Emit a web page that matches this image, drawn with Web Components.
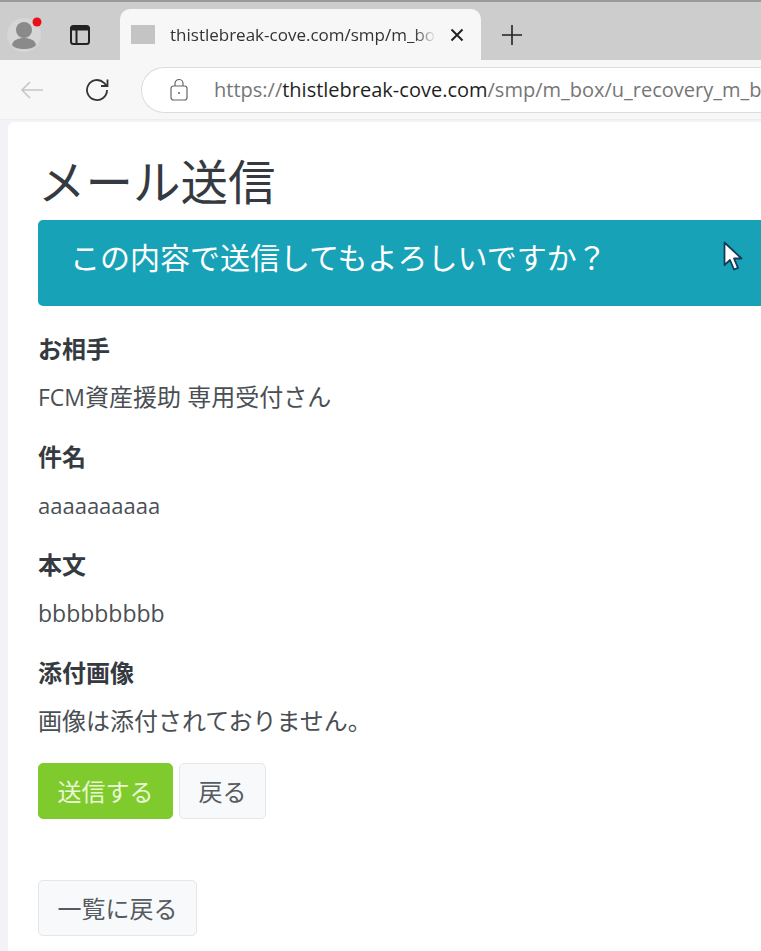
<!DOCTYPE html>
<html lang="ja">
<head>
<meta charset="utf-8">
<title>メール送信</title>
<style>
	html, body { margin: 0; height: 951px; overflow: hidden; background: #f2f2f7; }
	body { font-family: "Open Sans", "Noto Sans CJK JP", sans-serif; color: #343a40; }
	.latin { font-size: 23px; }
</style>
</head>
<body>
<browser-chrome url-host="thistlebreak-cove.com" url-path="/smp/m_box/u_recovery_m_box" tab-title="thistlebreak-cove.com/smp/m_box"></browser-chrome>
<page-card>
	<h-title>メール送信</h-title>
	<info-alert>この内容で送信してもよろしいですか？</info-alert>
	<mail-field label="お相手"><span class="latin">FCM</span>資産援助 専用受付さん</mail-field>
	<mail-field label="件名" latin>aaaaaaaaaa</mail-field>
	<mail-field label="本文"><span class="latin">bbbbbbbbb</span></mail-field>
	<mail-field label="添付画像">画像は添付されておりません。</mail-field>
	<button-row>
		<ui-button variant="primary">送信する</ui-button>
		<ui-button>戻る</ui-button>
	</button-row>
	<button-row class="list">
		<ui-button>一覧に戻る</ui-button>
	</button-row>
</page-card>

<script>
"use strict"

class BrowserChrome extends HTMLElement {
	connectedCallback() {
		const shadow = this.attachShadow({ mode: "open" })
		shadow.innerHTML = `
			<style>
				:host { display: block; font-family: "Open Sans", "Noto Sans", sans-serif; }
				svg { display: block; flex: none; }
				.strip {
					height: 58px;
					border-top: 2px solid #9a9a9a;
					background: #cdcdcd;
					display: flex;
					align-items: flex-end;
				}
				.left {
					width: 120px;
					height: 100%;
					flex: none;
					display: flex;
					align-items: center;
					padding: 8px 0 0 6px;
					gap: 25px;
					box-sizing: border-box;
				}
				.tab {
					width: 361px;
					height: 51px;
					flex: none;
					background: #f7f7f7;
					border-radius: 10px 10px 0 0;
					display: flex;
					align-items: center;
					padding-left: 11px;
					box-sizing: border-box;
					color: #333;
					font-size: 17px;
				}
				.favicon { width: 24px; height: 19px; background: #c4c4c4; flex: none; margin-right: 15px; }
				.title {
					width: 266px;
					white-space: nowrap;
					overflow: hidden;
					-webkit-mask-image: linear-gradient(90deg, #000 92%, transparent);
					mask-image: linear-gradient(90deg, #000 92%, transparent);
				}
				.close { margin-left: 14px; }
				.plus { margin: 0 0 14px 20px; }
				.toolbar {
					height: 60px;
					background: #f7f7f7;
					display: flex;
					align-items: center;
					box-sizing: border-box;
					border-bottom: 1px solid #ededed;
				}
				.back { margin-left: 20px; }
				.reload { margin-left: 41px; }
				.omnibox {
					flex: 1;
					min-width: 0;
					margin-left: 30px;
					height: 46px;
					background: #fff;
					border: 1px solid #dcdcdc;
					border-right: 0;
					border-radius: 23px 0 0 23px;
					display: flex;
					align-items: center;
					padding-left: 27px;
					box-sizing: border-box;
					overflow: hidden;
				}
				.url {
					margin-left: 25px;
					font-size: 20px;
					white-space: nowrap;
					color: #767676;
				}
				.url b { font-weight: 400; color: #1f1f1f; }
			</style>
			<div class="strip">
				<div class="left">
					<svg width="38" height="40" viewBox="0 0 38 40">
						<circle cx="18" cy="20" r="17" fill="#d6d6d6"/>
						<circle cx="18" cy="15" r="8" fill="#8a8a8a"/>
						<path d="M6 30c1-5 6-7 12-7s11 2 12 7c-2 3-7 4-12 4s-10-1-12-4z" fill="#8a8a8a"/>
						<circle cx="31" cy="7" r="4.5" fill="#e8111a"/>
					</svg>
					<svg width="22" height="22" viewBox="0 0 22 22" fill="none" stroke="#222" stroke-width="2">
						<rect x="2" y="2" width="18" height="18" rx="2.5"/>
						<path d="M2 4.5h18" stroke-width="4"/>
						<path d="M7.5 6v14"/>
					</svg>
				</div>
				<div class="tab">
					<span class="favicon"></span>
					<span class="title">${this.getAttribute("tab-title")}</span>
					<svg class="close" width="14" height="14" viewBox="0 0 14 14" stroke="#222" stroke-width="2"><path d="M1.5 1.5l11 11M12.500 1.500l-11 11"/></svg>
				</div>
				<svg class="plus" width="22" height="22" viewBox="0 0 22 22" stroke="#222" stroke-width="1.6"><path d="M11 1v20M1 11h20"/></svg>
			</div>
			<div class="toolbar">
				<svg class="back" width="24" height="22" viewBox="0 0 24 22" fill="none" stroke="#c6c6c6" stroke-width="1.6"><path d="M23 11H2M10 3l-8 8 8 8"/></svg>
				<svg class="reload" width="26" height="26" viewBox="0 0 26 26" fill="none" stroke="#333" stroke-width="1.8"><path d="M22 13a10 10 0 1 1-3-7.100L22 9"/><path d="M22.500 2.500V9H16"/></svg>
				<div class="omnibox">
					<svg width="20" height="24" viewBox="0 0 20 24" fill="none" stroke="#666" stroke-width="1.200"><rect x="2" y="8" width="16" height="14" rx="2.500"/><path d="M6 8V5.500a4 4 0 0 1 8 0V8"/><circle cx="10" cy="15" r="1" fill="#666" stroke="none"/></svg>
					<span class="url">https://<b>${this.getAttribute("url-host")}</b>${this.getAttribute("url-path")}</span>
				</div>
			</div>
		`
	}
}

class PageCard extends HTMLElement {
	connectedCallback() {
		const shadow = this.attachShadow({ mode: "open" })
		shadow.innerHTML = `
			<style>
				:host {
					display: block;
					margin: 2px 0 0 8px;
					height: 829px;
					background: #fff;
					border-top-left-radius: 6px;
					padding: 28px 0 0 30px;
					box-sizing: border-box;
					position: relative;
					overflow: hidden;
					font-family: "Open Sans", "Noto Sans CJK JP", sans-serif;
				}
				.cursor { position: absolute; left: 715px; top: 119px; }
			</style>
			<slot></slot>
			<svg class="cursor" width="20" height="32" viewBox="0 0 20 32">
				<path d="M1.500 1.500V24l5.500-5 4 9.500 4-1.700-4-9.300h7.500z" fill="#fff" stroke="#143c5a" stroke-width="1.800" stroke-linejoin="round"/>
			</svg>
		`
	}
}

class HTitle extends HTMLElement {
	connectedCallback() {
		const shadow = this.attachShadow({ mode: "open" })
		shadow.innerHTML = `
			<style>
				:host {
					display: block;
					font: 400 47.500px/60px "Noto Sans CJK JP", sans-serif;
					color: #343a40;
					height: 70px;
				}
			</style>
			<slot></slot>
		`
	}
}

class InfoAlert extends HTMLElement {
	connectedCallback() {
		const shadow = this.attachShadow({ mode: "open" })
		shadow.innerHTML = `
			<style>
				:host {
					display: flex;
					align-items: center;
					width: 760px;
					height: 86px;
					box-sizing: border-box;
					padding: 0 0 14px 32px;
					background: #17a2b8;
					border-radius: 5px 0 0 5px;
					color: #fff;
					font: 400 30px/1 "Noto Sans CJK JP", sans-serif;
					margin-bottom: 19px;
				}
			</style>
			<slot></slot>
		`
	}
}

class MailField extends HTMLElement {
	connectedCallback() {
		const shadow = this.attachShadow({ mode: "open" })
		shadow.innerHTML = `
			<style>
				:host {
					display: block;
					height: 108px;
					font-family: "Open Sans", "Noto Sans CJK JP", sans-serif;
					font-size: 24px;
				}
				.label { height: 48px; line-height: 48px; font-size: 24px; font-weight: 700; color: #343a40; }
				.value { height: 48px; line-height: 48px; color: #4a4f54; }
				:host([latin]) .value { font-size: 22px; }
			</style>
			<div class="label">${this.getAttribute("label")}</div>
			<div class="value"><slot></slot></div>
		`
	}
}

class ButtonRow extends HTMLElement {
	connectedCallback() {
		const shadow = this.attachShadow({ mode: "open" })
		shadow.innerHTML = `
			<style>
				:host { display: flex; gap: 6px; margin-top: 6px; }
				:host(.list) { margin-top: 61px; }
			</style>
			<slot></slot>
		`
	}
}

class UiButton extends HTMLElement {
	connectedCallback() {
		const shadow = this.attachShadow({ mode: "open" })
		shadow.innerHTML = `
			<style>
				:host {
					display: flex;
					align-items: center;
					height: 56px;
					padding: 0 18.500px;
					box-sizing: border-box;
					border: 1px solid #e4e6e9;
					border-radius: 5px;
					background: #f8f9fa;
					color: #555b60;
					font: 400 24px/1 "Noto Sans CJK JP", sans-serif;
				}
				:host([variant="primary"]) {
					background: #7fcb2e;
					border-color: #7fcb2e;
					color: #e9f7d4;
				}
			</style>
			<slot></slot>
		`
	}
}

customElements.define("browser-chrome", BrowserChrome)
customElements.define("page-card", PageCard)
customElements.define("h-title", HTitle)
customElements.define("info-alert", InfoAlert)
customElements.define("mail-field", MailField)
customElements.define("button-row", ButtonRow)
customElements.define("ui-button", UiButton)
</script>
</body>
</html>
